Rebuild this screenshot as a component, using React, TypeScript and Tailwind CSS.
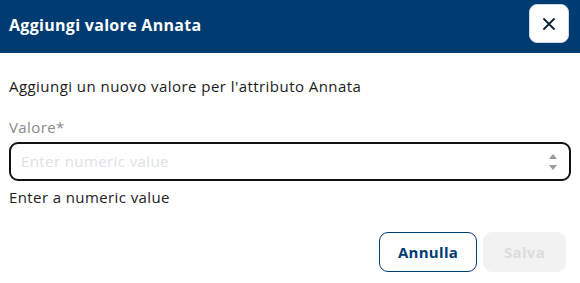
import React from "react";

export default function App() {
  return (
    <div className="w-[580px] h-[283px] bg-white flex flex-col" style={{ fontFamily: '"Open Sans", "Noto Sans", sans-serif' }}>
      <div className="h-[53px] bg-[#003b72] flex items-start justify-between pl-[9px] pr-[11px]">
        <div className="text-white font-bold text-[16px] tracking-[0.3px] mt-[13px] leading-[24px]">Aggiungi valore Annata</div>
        <button className="mt-[4px] w-[40px] h-[39px] bg-white rounded-[8px] border border-gray-300 flex items-center justify-center">
          <svg width="14" height="14" viewBox="0 0 14 14">
            <path d="M2 2 L12 12 M12 2 L2 12" stroke="#0a1f3a" strokeWidth="1.8" strokeLinecap="round" />
          </svg>
        </button>
      </div>
      <div className="px-[9px] flex flex-col">
        <div className="mt-[23px] text-[15px] tracking-[0.45px] leading-[20px] text-[#1a1a1a]">Aggiungi un nuovo valore per l'attributo Annata</div>
        <div className="mt-[21px] text-[15px] tracking-[0.4px] leading-[20px] text-[#8a8a8a]">Valore*</div>
        <div className="mt-[5px] h-[39px] border-2 border-[#111] rounded-[9px] flex items-center pl-[10px] pr-[12px]">
          <span className="flex-1 text-[15px] tracking-[0.4px] text-[#e0e2e6]">Enter numeric value</span>
          <div className="flex flex-col items-center gap-[6px]">
            <svg width="8" height="5" viewBox="0 0 8 5"><path d="M4 0 L8 5 L0 5 Z" fill="#9a9a9a" /></svg>
            <svg width="8" height="5" viewBox="0 0 8 5"><path d="M0 0 L8 0 L4 5 Z" fill="#9a9a9a" /></svg>
          </div>
        </div>
        <div className="mt-[6px] text-[15px] tracking-[0.4px] leading-[20px] text-[#222]">Enter a numeric value</div>
        <div className="mt-[25px] flex justify-end gap-[6px] pr-[5px]">
          <button className="w-[98px] h-[40px] border border-[#003b72] rounded-[9px] text-[#003b72] font-bold text-[15px] tracking-[0.3px]">Annulla</button>
          <button className="w-[83px] h-[40px] bg-[#f2f2f2] rounded-[9px] text-[#dcdcdc] font-bold text-[15px] tracking-[0.3px]">Salva</button>
        </div>
      </div>
    </div>
  );
}
